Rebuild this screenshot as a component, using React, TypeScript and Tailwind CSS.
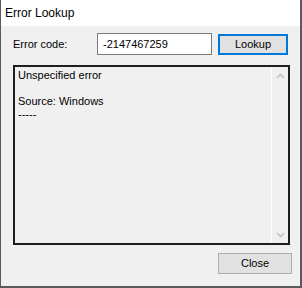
export default function App() {
  return (
    <div className="w-[302px] h-[288px] flex flex-col bg-[#f0f0f0] border-l border-r-2 border-b-2 border-[#5a5a5a] font-['Liberation_Sans',Arial,sans-serif] text-black">
      {/* Title bar */}
      <div className="h-[26px] shrink-0 bg-white flex items-center pl-[4px] text-[12px]">
        Error Lookup
      </div>

      {/* Error code row */}
      <div className="mt-[7px] ml-[12px] flex items-start h-[22px] text-[11px]">
        <div className="w-[84px] h-[22px] flex items-center">Error code:</div>
        <div className="w-[115px] h-[22px] bg-white border border-[#7a7a7a] flex items-center pl-[5px]">
          -2147467259
        </div>
        <button className="ml-[6px] mt-[1px] w-[70px] h-[21px] bg-[#e1e1e1] border-2 border-[#0078d7] flex items-center justify-center">
          Lookup
        </button>
      </div>

      {/* Output box */}
      <div className="mt-[10px] ml-[12px] w-[277px] h-[180px] border-2 border-[#1e1e1e] flex text-[11px] leading-[13px]">
        <div className="flex-1 pl-[3px] pt-[2px]">
          <div>Unspecified error</div>
          <div>&nbsp;</div>
          <div>Source: Windows</div>
          <div>-----</div>
        </div>
        <div className="w-[17px] border-l border-white flex flex-col justify-between">
          <div className="h-[17px] flex items-center justify-center">
            <svg width="9" height="6" viewBox="0 0 9 6">
              <path d="M1 5 L4.5 1.5 L8 5" fill="none" stroke="#c3c3c3" strokeWidth="1.6" />
            </svg>
          </div>
          <div className="h-[17px] flex items-center justify-center">
            <svg width="9" height="6" viewBox="0 0 9 6">
              <path d="M1 1 L4.5 4.5 L8 1" fill="none" stroke="#c3c3c3" strokeWidth="1.6" />
            </svg>
          </div>
        </div>
      </div>

      {/* Footer */}
      <div className="mt-[8px] flex justify-end pr-[8px]">
        <button className="w-[74px] h-[21px] bg-[#e1e1e1] border border-[#adadad] text-[11px] flex items-center justify-center">
          Close
        </button>
      </div>
    </div>
  );
}
